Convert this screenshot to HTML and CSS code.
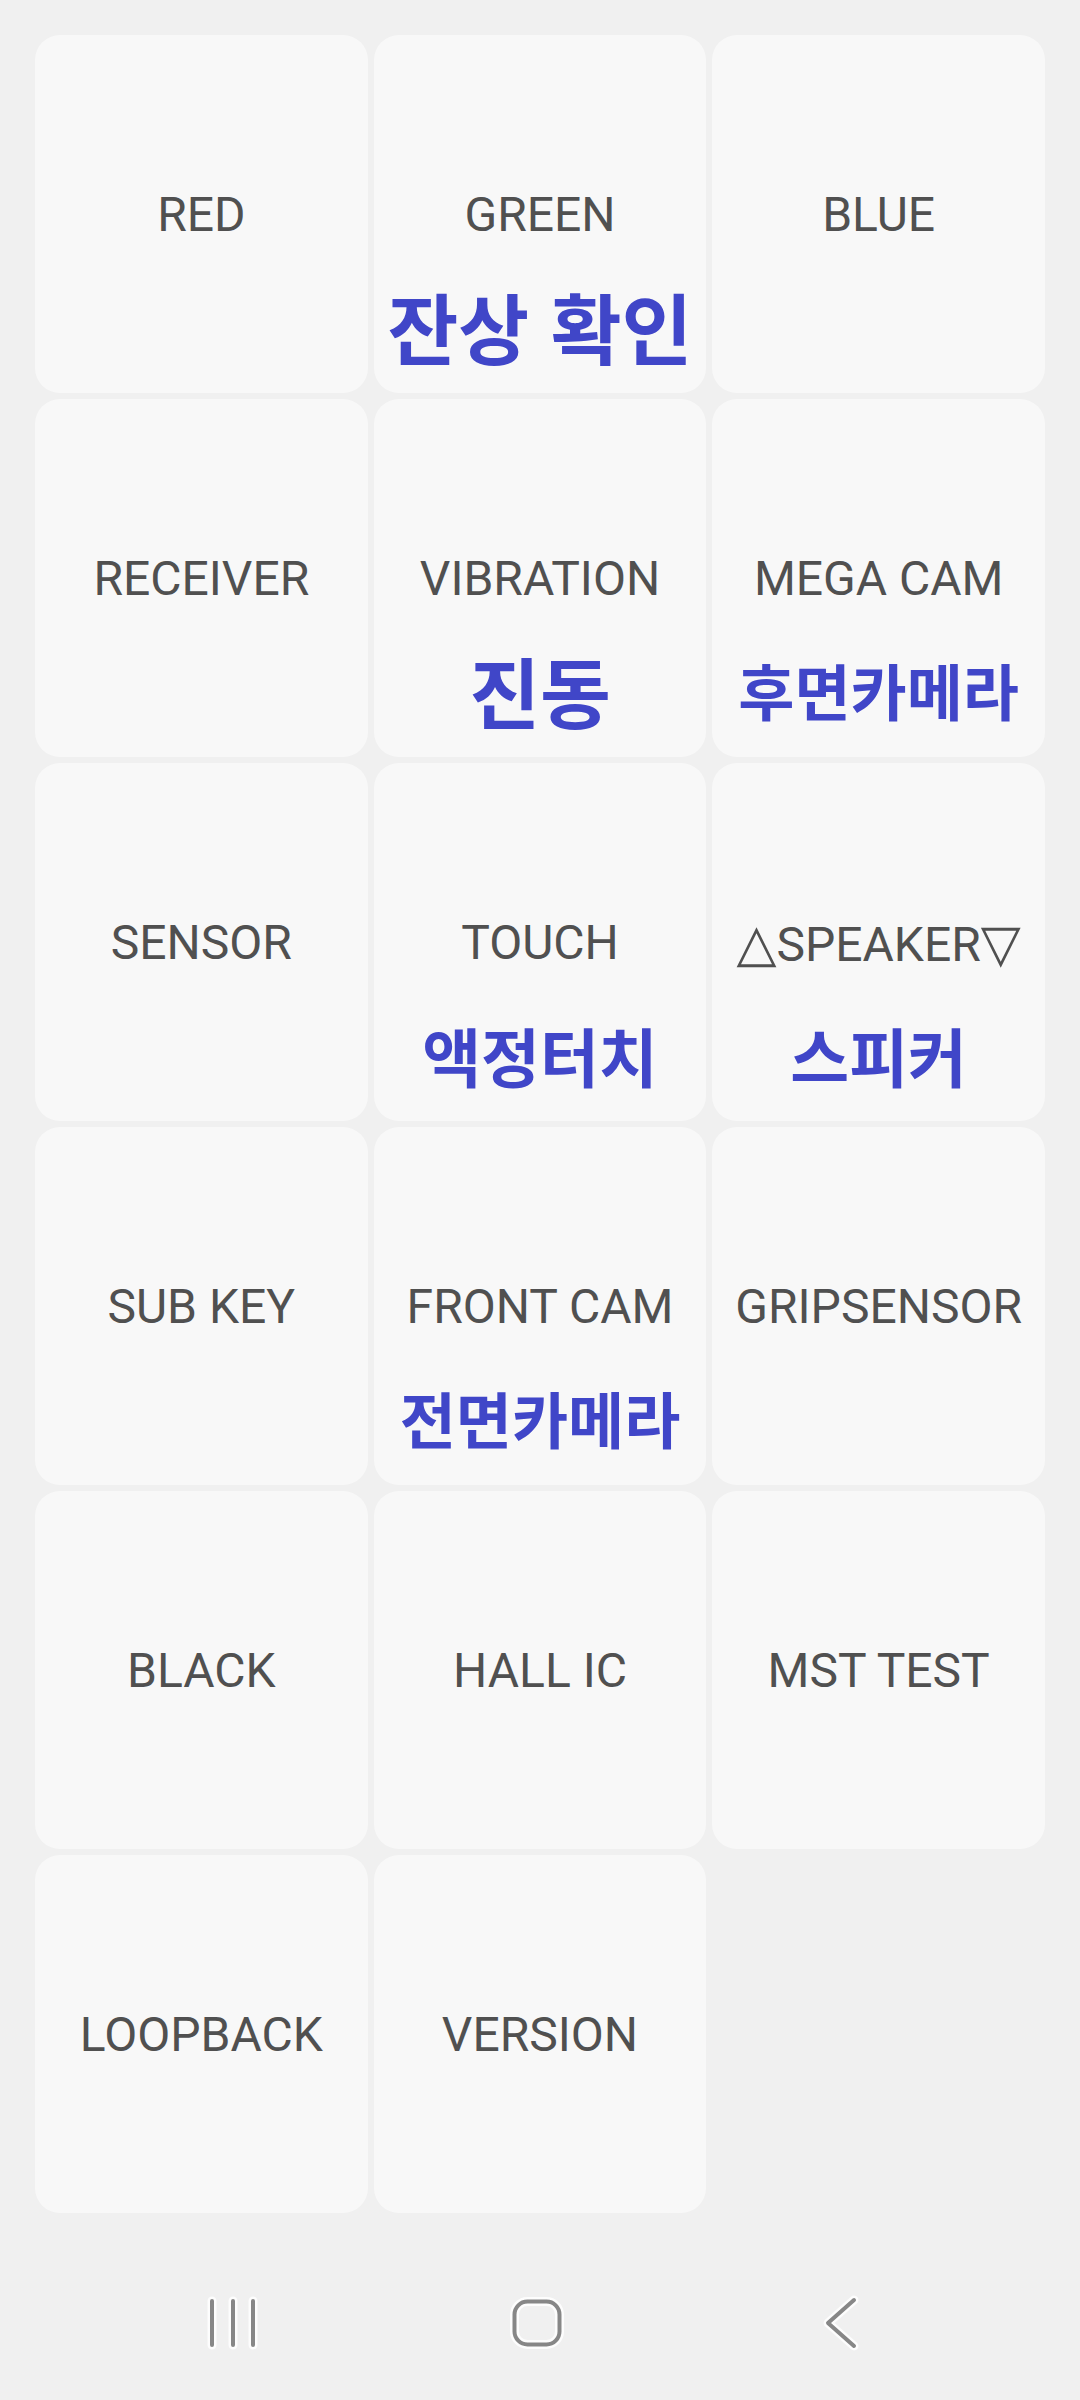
FILE: index.html
```html
<!DOCTYPE html>
<html lang="ko">
<head>
<meta charset="utf-8">
<title>Test Menu</title>
<link rel="stylesheet" href="styles.css">
</head>
<body>
<main class="grid">
  <div class="cell"><span class="en">RED</span></div>
  <div class="cell"><span class="en">GREEN</span><span class="ko ko-lg">잔상 확인</span></div>
  <div class="cell"><span class="en">BLUE</span></div>

  <div class="cell"><span class="en">RECEIVER</span></div>
  <div class="cell"><span class="en">VIBRATION</span><span class="ko ko-lg">진동</span></div>
  <div class="cell"><span class="en">MEGA CAM</span><span class="ko">후면카메라</span></div>

  <div class="cell"><span class="en">SENSOR</span></div>
  <div class="cell"><span class="en">TOUCH</span><span class="ko ko-md">액정터치</span></div>
  <div class="cell"><span class="en"><span class="tri">△</span>SPEAKER<span class="tri">▽</span></span><span class="ko ko-md">스피커</span></div>

  <div class="cell"><span class="en">SUB KEY</span></div>
  <div class="cell"><span class="en">FRONT CAM</span><span class="ko">전면카메라</span></div>
  <div class="cell"><span class="en">GRIPSENSOR</span></div>

  <div class="cell"><span class="en">BLACK</span></div>
  <div class="cell"><span class="en">HALL IC</span></div>
  <div class="cell"><span class="en">MST TEST</span></div>

  <div class="cell"><span class="en">LOOPBACK</span></div>
  <div class="cell"><span class="en">VERSION</span></div>
</main>
<nav class="navbar">
  <div class="nav-slot">
    <svg class="nav-icon" viewBox="-30 -30 60 60" width="60" height="60">
      <g class="halo"><path d="M-21 -22V22M0 -22V22M20 -22V22"/></g>
      <g class="ink"><path d="M-21 -22V22M0 -22V22M20 -22V22"/></g>
    </svg>
  </div>
  <div class="nav-slot">
    <svg class="nav-icon" viewBox="-30 -30 60 60" width="60" height="60">
      <g class="halo"><rect x="-22.5" y="-21.5" width="45" height="43" rx="13"/></g>
      <g class="ink"><rect x="-22.5" y="-21.5" width="45" height="43" rx="13"/></g>
    </svg>
  </div>
  <div class="nav-slot">
    <svg class="nav-icon" viewBox="-30 -30 60 60" width="60" height="60">
      <g class="halo"><path d="M13 -23L-13 0L13 23"/></g>
      <g class="ink"><path d="M13 -23L-13 0L13 23"/></g>
    </svg>
  </div>
</nav>
</body>
</html>
```

FILE: styles.css
```css
html, body {
  margin: 0;
  padding: 0;
}

body {
  width: 1080px;
  height: 2400px;
  background: #f0f0f0;
  overflow: hidden;
  font-family: Roboto, "Noto Sans", "DejaVu Sans", "Noto Sans CJK KR", sans-serif;
}

.grid {
  display: grid;
  grid-template-columns: repeat(3, 1fr);
  grid-auto-rows: 358px;
  gap: 6px;
  padding: 35px 35px 0 35px;
}

.cell {
  background: #f8f8f8;
  border-radius: 25px;
  display: flex;
  flex-direction: column;
  align-items: center;
  padding-top: 152px;
  box-sizing: border-box;
}

.en {
  font-size: 48px;
  line-height: 56px;
  height: 56px;
  color: #505050;
  white-space: nowrap;
}

.tri {
  font-family: "DejaVu Sans", sans-serif;
  font-size: 52px;
  line-height: 56px;
}

.ko {
  margin-top: 43px;
  font-family: "Noto Sans CJK KR", sans-serif;
  font-weight: 700;
  font-size: 61px;
  line-height: 80px;
  color: #4046c8;
  white-space: nowrap;
}

.ko-md {
  font-size: 64px;
}

.ko-lg {
  font-size: 77px;
}

.navbar {
  display: flex;
  justify-content: center;
  align-items: center;
  height: 154px;
  padding-top: 33px;
  padding-right: 7px;
}

.nav-slot {
  width: 304px;
  display: flex;
  justify-content: center;
  align-items: center;
}

.nav-icon {
  display: block;
  overflow: visible;
}

.nav-icon .halo {
  fill: none;
  stroke: #ffffff;
  stroke-opacity: 0.85;
  stroke-width: 9;
  stroke-linecap: round;
  stroke-linejoin: round;
}

.nav-icon .ink {
  fill: none;
  stroke: #878787;
  stroke-width: 4;
  stroke-linecap: round;
  stroke-linejoin: round;
}
```
